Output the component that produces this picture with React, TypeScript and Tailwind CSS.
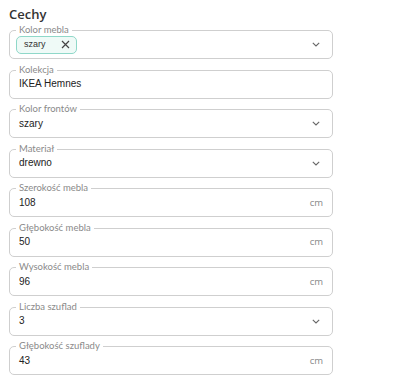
import React from 'react';

type Field = {
  label: string;
  value?: string;
  kind: 'select' | 'text' | 'unit' | 'chip';
};

const fields: Field[] = [
  { label: 'Kolor mebla', value: 'szary', kind: 'chip' },
  { label: 'Kolekcja', value: 'IKEA Hemnes', kind: 'text' },
  { label: 'Kolor frontów', value: 'szary', kind: 'select' },
  { label: 'Materiał', value: 'drewno', kind: 'select' },
  { label: 'Szerokość mebla', value: '108', kind: 'unit' },
  { label: 'Głębokość mebla', value: '50', kind: 'unit' },
  { label: 'Wysokość mebla', value: '96', kind: 'unit' },
  { label: 'Liczba szuflad', value: '3', kind: 'select' },
  { label: 'Głębokość szuflady', value: '43', kind: 'unit' },
];

const Chevron = () => (
  <svg width="8" height="5" viewBox="0 0 8 5" className="text-[#666]">
    <path d="M0.8 0.8l3.2 3.2 3.2-3.2" fill="none" stroke="currentColor" strokeWidth="1.1" />
  </svg>
);

const Chip = ({ text }: { text: string }) => (
  <div className="flex items-center h-[18px] w-[61px] ml-[-3px] pl-[7px] pr-[6px] justify-between rounded-[5px] border border-[#8fd8c9] bg-[#effaf7]">
    <span className="text-[9px] text-[#333] font-['Liberation_Sans',sans-serif]">{text}</span>
    <svg width="9" height="9" viewBox="0 0 9 9" className="text-[#444]">
      <path d="M1 1l7 7M8 1l-7 7" stroke="currentColor" strokeWidth="1.2" />
    </svg>
  </div>
);

const FormField = ({ f }: { f: Field }) => (
  <div className="relative h-[29px] rounded-[5px] border border-[#cfcfcf] flex items-center pl-[9px] pr-[9px]">
    <span className="absolute left-[6px] top-[-7px] bg-white px-[3px] text-[9.5px] leading-[12px] text-[#8a8a8a] font-['Lato',sans-serif]">
      {f.label}
    </span>
    <div className="flex-1 flex items-center">
      {f.kind === 'chip' ? (
        <Chip text={f.value || ''} />
      ) : (
        <span className="text-[10px] leading-[12px] text-[#222] font-['Liberation_Sans',sans-serif]">{f.value}</span>
      )}
    </div>
    {(f.kind === 'select' || f.kind === 'chip') && (
      <div className="mr-[3px] flex items-center">
        <Chevron />
      </div>
    )}
    {f.kind === 'unit' && (
      <span className="text-[9.5px] leading-[12px] text-[#888] font-['Open_Sans',sans-serif]">cm</span>
    )}
  </div>
);

export default function App() {
  return (
    <div className="w-[400px] h-[376px] bg-white pl-[9px] pt-[6px] overflow-hidden">
      <h2 className="text-[13px] font-semibold text-[#333] leading-[16px] font-['Open_Sans',sans-serif]">Cechy</h2>
      <div className="w-[324px] mt-[8px] flex flex-col gap-[10.5px]">
        {fields.map((f, i) => (
          <FormField key={i} f={f} />
        ))}
      </div>
    </div>
  );
}
